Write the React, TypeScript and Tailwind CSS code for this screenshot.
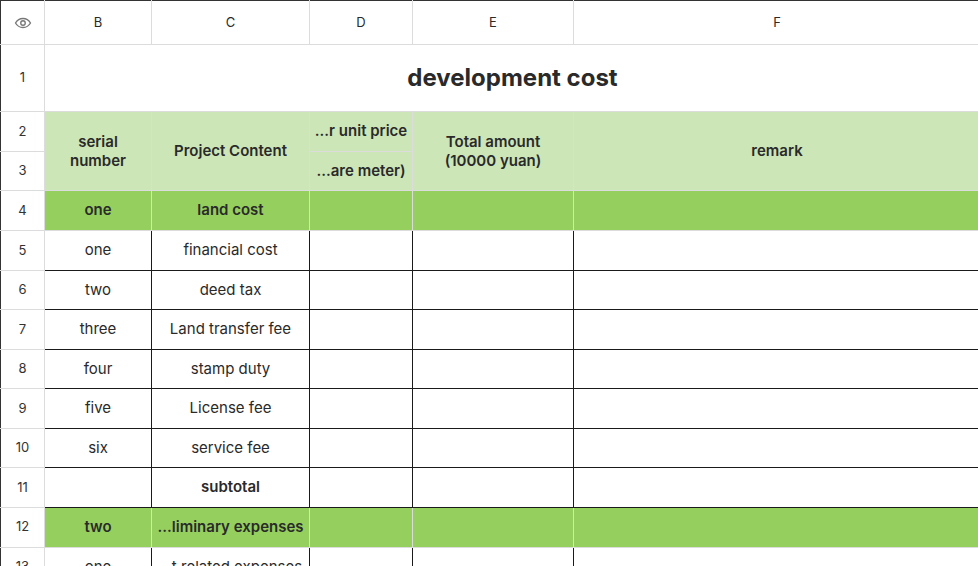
import React from "react";

const G = "border border-[#dcdcdc]";
const K = "border border-[#1a1a1a]";
const rh = `border border-[#dcdcdc] border-l-[#333] w-[44px] text-[13px] text-[#333] font-normal text-center bg-white`;

function Eye() {
  return (
    <svg width="18" height="18" viewBox="0 0 24 24" fill="none" stroke="#777" strokeWidth="1.8" className="mx-auto">
      <path d="M2 12s3.5-6 10-6 10 6 10 6-3.5 6-10 6S2 12 2 12z" />
      <circle cx="12" cy="12" r="3" />
    </svg>
  );
}

const data: [string, string][] = [
  ["one", "financial cost"],
  ["two", "deed tax"],
  ["three", "Land transfer fee"],
  ["four", "stamp duty"],
  ["five", "License fee"],
  ["six", "service fee"],
];

export default function App() {
  return (
    <div className="w-[978px] h-[566px] overflow-hidden bg-white" style={{ fontFamily: "Inter, 'Noto Sans', sans-serif" }}>
      <table className="border-collapse table-fixed text-[15px] text-[#2a2a2a]" style={{ width: 980 }}>
        <colgroup>
          <col style={{ width: 44 }} />
          <col style={{ width: 107 }} />
          <col style={{ width: 158 }} />
          <col style={{ width: 103 }} />
          <col style={{ width: 161 }} />
          <col style={{ width: 407 }} />
        </colgroup>
        <tbody>
          <tr className="h-[44px] text-[13px]">
            <td className={`${rh} border-t-[#333]`}><Eye /></td>
            {["B", "C", "D", "E", "F"].map((c) => (
              <td key={c} className={`${G} border-t-[#333] text-center`}>{c}</td>
            ))}
          </tr>
          <tr className="h-[67px]">
            <td className={rh}>1</td>
            <td colSpan={5} className={`${G} text-center text-[24px] font-bold`}>development cost</td>
          </tr>
          <tr className="h-[40px] bg-[#cde6b8] font-semibold">
            <td className={rh}>2</td>
            <td rowSpan={2} className={`${G} text-center leading-[19px]`}>serial<br />number</td>
            <td rowSpan={2} className={`${G} text-center`}>Project Content</td>
            <td className={`${G} text-center whitespace-nowrap overflow-hidden`}>...r unit price</td>
            <td rowSpan={2} className={`${G} text-center align-top pt-[20px] leading-[19px]`}>Total amount<br />(10000 yuan)</td>
            <td rowSpan={2} className={`${G} text-center`}>remark</td>
          </tr>
          <tr className="h-[39px] bg-[#cde6b8] font-semibold">
            <td className={rh}>3</td>
            <td className={`${G} text-center whitespace-nowrap overflow-hidden`}>...are meter)</td>
          </tr>
          <tr className="h-[40px] bg-[#95d05f] font-semibold">
            <td className={rh}>4</td>
            <td className={`${G} text-center`}>one</td>
            <td className={`${G} text-center`}>land cost</td>
            <td className={G}></td>
            <td className={G}></td>
            <td className={G}></td>
          </tr>
          {data.map(([a, b], i) => (
            <tr key={i} className="h-[39.5px]">
              <td className={rh}>{5 + i}</td>
              <td className={`${K} text-center`}>{a}</td>
              <td className={`${K} text-center`}>{b}</td>
              <td className={K}></td>
              <td className={K}></td>
              <td className={K}></td>
            </tr>
          ))}
          <tr className="h-[39.5px]">
            <td className={rh}>11</td>
            <td className={K}></td>
            <td className={`${K} text-center font-semibold`}>subtotal</td>
            <td className={K}></td>
            <td className={K}></td>
            <td className={K}></td>
          </tr>
          <tr className="h-[40px] bg-[#95d05f] font-semibold">
            <td className={rh}>12</td>
            <td className={`${G} text-center`}>two</td>
            <td className={`${G} text-center whitespace-nowrap overflow-hidden`}>...liminary expenses</td>
            <td className={G}></td>
            <td className={G}></td>
            <td className={G}></td>
          </tr>
          <tr className="h-[39.5px]">
            <td className={rh}>13</td>
            <td className={`${K} text-center`}>one</td>
            <td className={`${K} text-center whitespace-nowrap overflow-hidden`}>...t related expenses</td>
            <td className={K}></td>
            <td className={K}></td>
            <td className={K}></td>
          </tr>
        </tbody>
      </table>
    </div>
  );
}
